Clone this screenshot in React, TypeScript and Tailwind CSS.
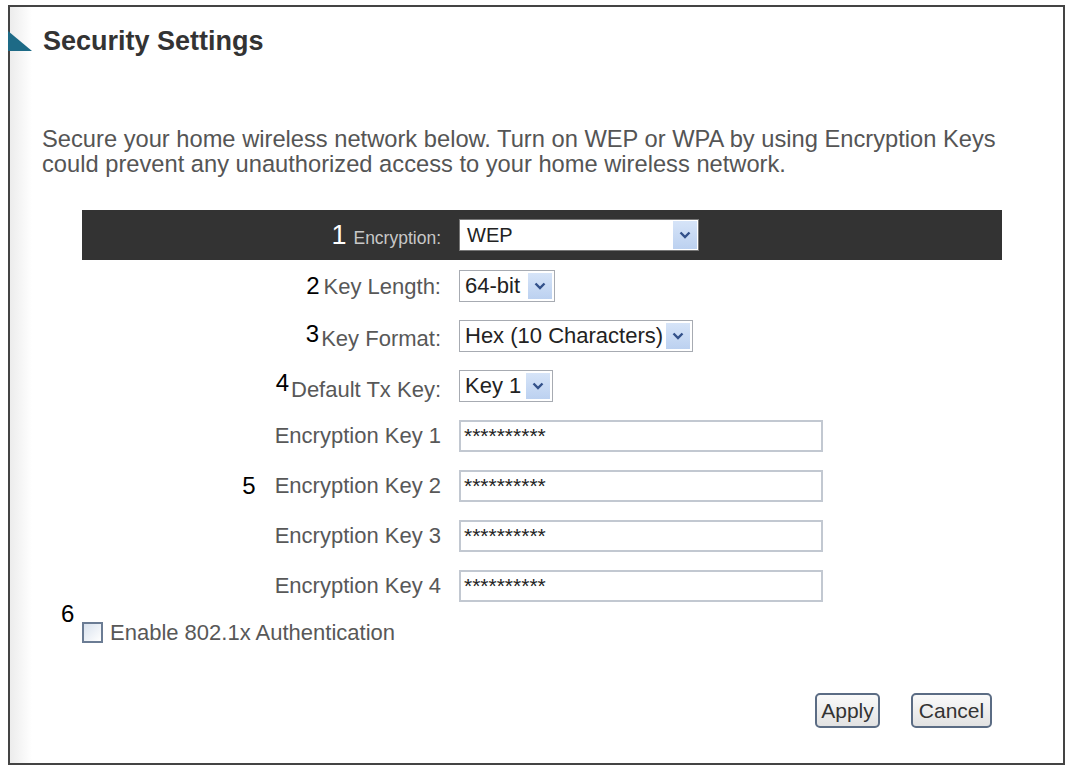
import React from 'react';

const font = { fontFamily: '"Liberation Sans", Arial, sans-serif' };

function Chevron() {
  return (
    <span className="flex h-full w-[24px] items-center justify-center bg-[linear-gradient(#d6e4f8,#bcd1f0)]">
      <svg width="12" height="8" viewBox="0 0 12 8">
        <path d="M1.5 1.5l4.5 4.5 4.5-4.5" fill="none" stroke="#33518a" strokeWidth="2.4" />
      </svg>
    </span>
  );
}

function FakeSelect({ value, width }: { value: string; width: string }) {
  return (
    <div className={`flex h-[32px] ${width} items-center justify-between border border-[#a7abb2] bg-white py-[2px] pl-[5px] pr-[2px]`}>
      <span className="text-[22px] leading-none text-[#222]">{value}</span>
      <Chevron />
    </div>
  );
}

function KeyInput() {
  return (
    <div className="h-[32px] w-[364px] border-2 border-[#c2c8d1] bg-white px-[3px] pt-[3px]">
      <span className="block text-[21px] leading-none text-[#222]">**********</span>
    </div>
  );
}

interface RowProps {
  num?: string;
  numClass?: string;
  label: string;
  children: React.ReactNode;
}

function Row({ num, numClass = '', label, children }: RowProps) {
  return (
    <div className="flex h-[50px] items-center">
      <div className="flex w-[377px] items-end justify-end pr-[18px]">
        {num && <span className={`text-[24px] leading-none text-black ${numClass}`}>{num}</span>}
        <span className="text-[22px] leading-[24px] text-[#585858]">{label}</span>
      </div>
      {children}
    </div>
  );
}

export default function App() {
  return (
    <div className="h-[768px] w-[1068px] bg-white pl-[8px] pt-[5px]" style={font}>
      <div className="flex h-[760px] w-[1057px] flex-col border-2 border-[#444] bg-[linear-gradient(to_right,#ececec,#ffffff_22px)]">
        <div className="mt-[18px] flex h-[32px] items-center">
          <svg width="24" height="20" viewBox="0 0 24 20" className="-ml-[2px]">
            <polygon points="0,0 0,20 24,20" fill="#1d6a86" />
          </svg>
          <h1 className="ml-[11px] text-[27px] font-bold leading-[32px] text-[#333]">Security Settings</h1>
        </div>

        <p className="ml-[32px] mt-[70px] text-[23.7px] leading-[25px] text-[#555]">
          Secure your home wireless network below. Turn on WEP or WPA by using Encryption Keys
          <br />
          could prevent any unauthorized access to your home wireless network.
        </p>

        <div className="ml-[72px] mt-[33px] w-[920px]">
          <div className="flex h-[50px] items-center bg-[#333]">
            <div className="flex w-[377px] items-end justify-end pr-[18px]">
              <span className="mr-[7px] text-[27px] leading-none text-white">1</span>
              <span className="text-[17.5px] leading-[22px] text-[#c8c8c8]">Encryption:</span>
            </div>
            <div className="flex h-[32px] w-[240px] items-center justify-between border border-[#777] bg-white py-[1px] pl-[7px] pr-[1px]">
              <span className="text-[20px] leading-none text-[#222]">WEP</span>
              <Chevron />
            </div>
          </div>

          <div className="mt-[1px]">
            <Row num="2" numClass="mr-[4px] mb-[1px]" label="Key Length:">
              <FakeSelect value="64-bit" width="w-[96px]" />
            </Row>
            <Row num="3" numClass="mr-[2px] mb-[5px]" label="Key Format:">
              <FakeSelect value="Hex (10 Characters)" width="w-[234px]" />
            </Row>
            <Row num="4" numClass="mr-[2px] mb-[7px]" label="Default Tx Key:">
              <FakeSelect value="Key 1" width="w-[94px]" />
            </Row>
            <Row label="Encryption Key 1">
              <KeyInput />
            </Row>
            <Row num="5" numClass="mr-[19px]" label="Encryption Key 2">
              <KeyInput />
            </Row>
            <Row label="Encryption Key 3">
              <KeyInput />
            </Row>
            <Row label="Encryption Key 4">
              <KeyInput />
            </Row>
          </div>
        </div>

        <div className="ml-[51px] mt-[-9px] flex items-start">
          <span className="w-[21px] text-[24px] leading-none text-black">6</span>
          <span className="mt-[20px] h-[21px] w-[21px] border-2 border-[#6b7c94] bg-[linear-gradient(135deg,#d9e2ee,#ffffff)]" />
          <span className="ml-[7px] mt-[20px] text-[22px] leading-[22px] text-[#585858]">Enable 802.1x Authentication</span>
        </div>

        <div className="mr-[71px] mt-[49px] flex justify-end gap-[31px]">
          <button className="h-[35px] w-[65px] rounded-[5px] border-2 border-[#5b6c84] bg-[linear-gradient(#fafafa,#e2e2e2)] text-[21px] leading-none text-[#333]">
            Apply
          </button>
          <button className="h-[35px] w-[81px] rounded-[5px] border-2 border-[#5b6c84] bg-[linear-gradient(#fafafa,#e2e2e2)] text-[21px] leading-none text-[#333]">
            Cancel
          </button>
        </div>
      </div>
    </div>
  );
}
